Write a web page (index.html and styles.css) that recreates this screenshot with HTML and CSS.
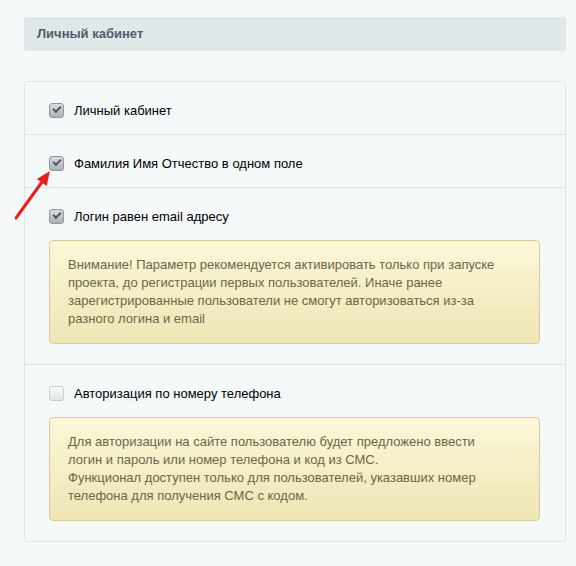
FILE: index.html
```html
<!DOCTYPE html>
<html>
<head>
    <title>Личный кабинет</title>
    <link rel="stylesheet" href="styles.css">
</head>
<body>
    <div class="page">
        <div class="section-title">Личный кабинет</div>

        <div class="options">
            <div class="option">
                <label class="check-row">
                    <span class="check checked"></span>
                    Личный кабинет
                </label>
            </div>
            <div class="option">
                <label class="check-row">
                    <span class="check checked"></span>
                    Фамилия Имя Отчество в одном поле
                </label>
            </div>
            <div class="option">
                <label class="check-row">
                    <span class="check checked"></span>
                    Логин равен email адресу
                </label>
                <div class="note">
                    Внимание! Параметр рекомендуется активировать только при запуске<br>
                    проекта, до регистрации первых пользователей. Иначе ранее<br>
                    зарегистрированные пользователи не смогут авторизоваться из-за<br>
                    разного логина и email
                </div>
            </div>
            <div class="option">
                <label class="check-row">
                    <span class="check"></span>
                    Авторизация по номеру телефона
                </label>
                <div class="note">
                    Для авторизации на сайте пользователю будет предложено ввести<br>
                    логин и пароль или номер телефона и код из СМС.<br>
                    Функционал доступен только для пользователей, указавших номер<br>
                    телефона для получения СМС с кодом.
                </div>
            </div>
        </div>
    </div>

    <!-- red pointer drawn over the page -->
    <svg class="pointer" width="60" height="60" viewBox="0 0 60 60">
        <line x1="16" y1="48" x2="42" y2="12" stroke="#e8201c" stroke-width="3" stroke-linecap="round"/>
        <polygon points="50,1 46.7,16 36.9,9" fill="#e8201c"/>
    </svg>
</body>
</html>
```

FILE: styles.css
```css
body {
    margin: 0;
    background-color: #f5f9fa;
    font-family: "Liberation Sans", Arial, sans-serif;
    font-size: 13px;
    color: #000;
}

.page {
    padding: 17px 10px 24px 24px;
}

.section-title {
    height: 34px;
    line-height: 34px;
    padding-left: 13px;
    background-color: #e0e8ea;
    border-radius: 2px;
    font-weight: bold;
    color: #535c69;
}

.options {
    margin-top: 30px;
    border: 1px solid #dde6ea;
    border-radius: 3px;
}

.option {
    padding: 21px 24px 16px;
    border-top: 1px solid #dde6ea;
}

.option:first-child {
    border-top: none;
}

.check-row {
    display: flex;
    align-items: center;
    height: 15px;
}

.check {
    box-sizing: border-box;
    width: 15px;
    height: 15px;
    margin-right: 10px;
    border: 1px solid #c9ced1;
    border-radius: 3px;
    background: linear-gradient(#fbfcfc, #e2e5e7);
}

.check.checked {
    border-color: #8f9599;
    background: linear-gradient(#d9dde0, #aab0b4);
    position: relative;
}

.check.checked::after {
    content: "";
    position: absolute;
    left: 3px;
    top: 2px;
    width: 6px;
    height: 3px;
    border-left: 2px solid #4d545a;
    border-bottom: 2px solid #4d545a;
    transform: rotate(-45deg);
}

.note {
    margin: 16px 1px 4px 0;
    padding: 15px 18px 15px;
    line-height: 18px;
    border: 1px solid #d9c995;
    border-radius: 4px;
    background: linear-gradient(#fbf7d8, #efe6b5);
    color: #6e6548;
}

.pointer {
    position: absolute;
    left: 0;
    top: 170px;
}
```
